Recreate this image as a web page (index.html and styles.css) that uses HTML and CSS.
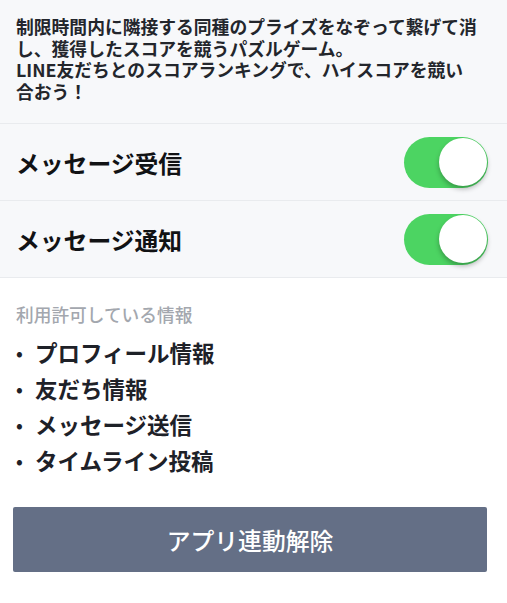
FILE: index.html
```html
<!DOCTYPE html>
<html lang="ja">
<head>
<meta charset="utf-8">
<link rel="stylesheet" href="styles.css">
</head>
<body>
<div class="page">
  <section class="desc">
    <p>制限時間内に隣接する同種のプライズをなぞって繋げて消し、獲得したスコアを競うパズルゲーム。<br>LINE友だちとのスコアランキングで、ハイスコアを競い<br>合おう！</p>
  </section>
  <div class="row">
    <span class="row-title">メッセージ受信</span>
    <span class="toggle on"><span class="knob"></span></span>
  </div>
  <div class="row">
    <span class="row-title">メッセージ通知</span>
    <span class="toggle on"><span class="knob"></span></span>
  </div>
  <section class="perms">
    <div class="perms-label">利用許可している情報</div>
    <ul class="perm-list">
      <li><span class="dot">•</span>プロフィール情報</li>
      <li><span class="dot">•</span>友だち情報</li>
      <li><span class="dot">•</span>メッセージ送信</li>
      <li><span class="dot">•</span>タイムライン投稿</li>
    </ul>
  </section>
  <div class="actions">
    <button class="unlink">アプリ連動解除</button>
  </div>
</div>
</body>
</html>
```
FILE: styles.css
```css
* { box-sizing: border-box; }
html, body { margin: 0; padding: 0; background: #ffffff; }
body {
  font-family: "Noto Sans CJK JP", "Noto Sans", sans-serif;
  color: #1e2126;
}
.page { width: 507px; }
.desc {
  background: #f7f8fa;
  padding: 16px 24px 21px 16px;
  border-bottom: 1px solid #e9ebee;
}
.desc p {
  margin: 0;
  font-size: 17.8px;
  line-height: 21.5px;
  font-weight: 700;
  color: #23262c;
}
.row {
  height: 77px;
  background: #f7f8fa;
  border-bottom: 1px solid #e9ebee;
  display: flex;
  align-items: center;
  justify-content: space-between;
  padding: 0 19px 0 16px;
}
.row-title {
  font-size: 23.8px;
  font-weight: 700;
  color: #111214;
}
.toggle {
  width: 84px;
  height: 51px;
  border-radius: 26px;
  background: #4cd462;
  display: flex;
  align-items: center;
  justify-content: flex-end;
  padding: 0 1px;
}
.knob {
  width: 48px;
  height: 48px;
  border-radius: 50%;
  background: #ffffff;
  box-shadow: 0 3px 5px rgba(0, 0, 0, 0.28);
}
.perms { padding: 24px 16px 0 16px; }
.perms-label {
  font-size: 17.7px;
  line-height: 24px;
  font-weight: 500;
  color: #a3a7ae;
}
.perm-list {
  list-style: none;
  margin: 8px 0 0 0;
  padding: 0;
}
.perm-list li {
  font-size: 22.5px;
  line-height: 36px;
  font-weight: 700;
  color: #1e2128;
  display: flex;
}
.dot {
  width: 19px;
  font-size: 18px;
}
.actions { padding: 29px 20px 0 13px; }
.unlink {
  display: block;
  width: 474px;
  height: 65px;
  border: none;
  border-radius: 2px;
  background: #646f86;
  color: #ffffff;
  font-family: "Noto Sans CJK JP", "Noto Sans", sans-serif;
  font-size: 23.8px;
  font-weight: 500;
  padding: 0;
}
```
